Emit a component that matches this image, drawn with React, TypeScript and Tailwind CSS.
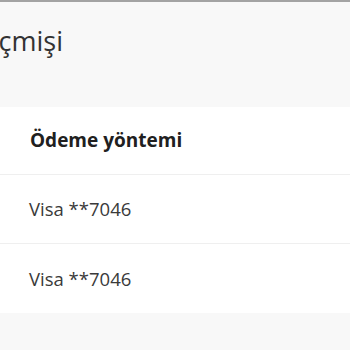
export default function App() {
  return (
    <div
      className="w-[350px] h-[350px] overflow-hidden bg-[#f8f8f8] flex flex-col"
      style={{ fontFamily: '"Open Sans", "Noto Sans", sans-serif' }}
    >
      <div className="h-[2px] bg-[#a3a3a3] shrink-0" />
      <div className="h-[105px] shrink-0 pt-[25px]">
        <div className="w-[63px] flex justify-end">
          <h1 className="shrink-0 text-[27px] leading-none text-[#333333] whitespace-nowrap">
            Ödeme geçmişi
          </h1>
        </div>
      </div>
      <div className="bg-white shrink-0">
        <div className="h-[68px] flex items-center pl-[30px] border-b border-[#efefef]">
          <span className="text-[19px] font-bold text-[#202020]">Ödeme yöntemi</span>
        </div>
        <div className="h-[69px] flex items-center pl-[29px] border-b border-[#efefef]">
          <span className="text-[18.5px] text-[#3a3a3a]">Visa **7046</span>
        </div>
        <div className="h-[69px] flex items-center pl-[29px]">
          <span className="text-[18.5px] text-[#3a3a3a]">Visa **7046</span>
        </div>
      </div>
    </div>
  );
}
